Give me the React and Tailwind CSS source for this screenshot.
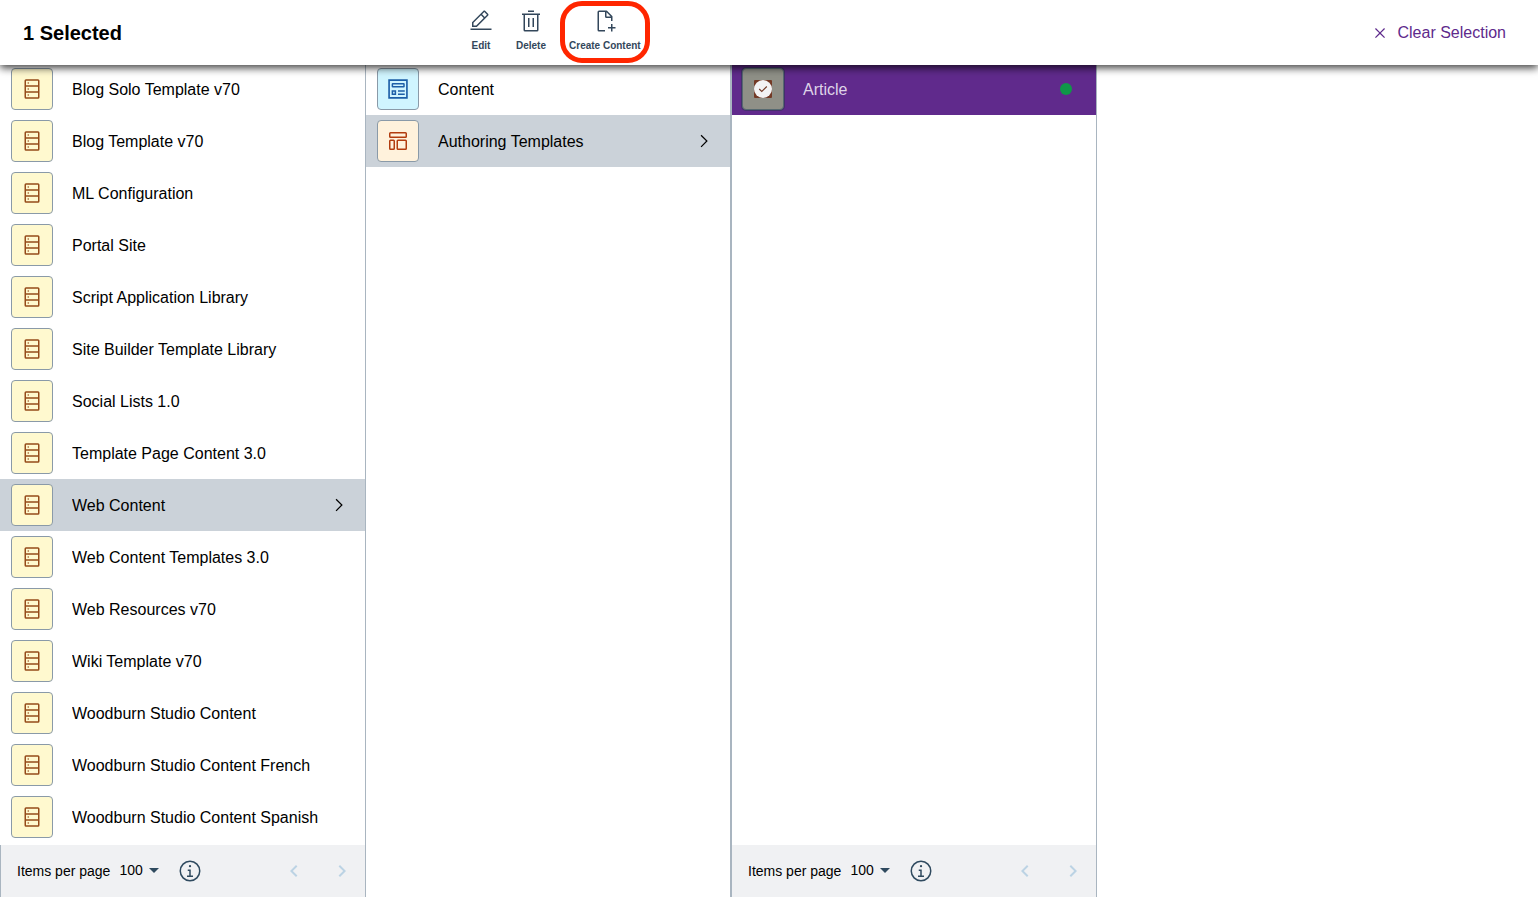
import { useState } from "react";

function Glyph({ size = "size-6", children, viewBox = "0 0 32 32", className = "" }) {
  return (
    <svg viewBox={viewBox} fill="currentColor" aria-hidden="true" className={`${size} shrink-0 ${className}`}>
      {children}
    </svg>
  );
}

const EditIcon = () => (
  <Glyph>
    <path d="M2 26H30V28H2z" />
    <path d="M25.4 9c.8-.8.8-2 0-2.8l-3.6-3.6c-.8-.8-2-.8-2.8 0l-15 15V24h6.4L25.4 9zM20.4 4L24 7.6l-3 3L17.4 7l3-3zM6 22v-3.6l10-10 3.6 3.6-10 10H6z" />
  </Glyph>
);

const TrashIcon = () => (
  <Glyph>
    <path d="M12 12H14V24H12zM18 12H20V24H18z" />
    <path d="M4 6V8H6V28a2 2 0 0 0 2 2H24a2 2 0 0 0 2-2V8h2V6zM8 28V8H24V28zM12 2H20V4H12z" />
  </Glyph>
);

const DocumentAddIcon = () => (
  <Glyph>
    <path d="M30 24H26V20H24V24H20V26H24V30H26V26H30z" />
    <path d="M16 28H8V4h8v6a2 2 0 0 0 2 2h6v4h2V10a.9.9 0 0 0-.3-.7l-7-7A.9.9 0 0 0 18 2H8A2 2 0 0 0 6 4V28a2 2 0 0 0 2 2h8zM18 4.4 23.6 10H18z" />
  </Glyph>
);

const LibraryIcon = () => (
  <Glyph>
    <path d="M24 3H8A2 2 0 0 0 6 5V27a2 2 0 0 0 2 2H24a2 2 0 0 0 2-2V5A2 2 0 0 0 24 3zm0 2v6H8V5zM8 19V13H24v6zm0 8V21H24v6z" />
    <circle cx="11" cy="8" r="1" />
    <circle cx="11" cy="16" r="1" />
    <circle cx="11" cy="24" r="1" />
  </Glyph>
);

const ContentIcon = () => (
  <Glyph>
    <path fillRule="evenodd" d="M3 3H29V29H3zM5.2 5.2V26.8H26.8V5.2z" />
    <path fillRule="evenodd" d="M9 8H23.500a1.500 1.500 0 0 1 1.500 1.500V12.500a1.500 1.500 0 0 1-1.500 1.500H9a1.500 1.500 0 0 1-1.500-1.500V9.500A1.500 1.500 0 0 1 9 8zM9.500 10V12H23V10z" />
    <path fillRule="evenodd" d="M7.500 17.500H13.500V24H7.500zM9.500 19.500V22H11.500V19.500z" />
    <path d="M16 17.500H25V19.500H16zM16 22H25V24H16z" />
  </Glyph>
);

const TemplateIcon = () => (
  <Glyph>
    <path d="M26 6v4H6V6H26m0-2H6A2 2 0 0 0 4 6v4a2 2 0 0 0 2 2H26a2 2 0 0 0 2-2V6a2 2 0 0 0-2-2z" />
    <path d="M10 16V26H6V16h4m0-2H6a2 2 0 0 0-2 2V26a2 2 0 0 0 2 2h4a2 2 0 0 0 2-2V16a2 2 0 0 0-2-2z" />
    <path d="M26 16V26H16V16H26m0-2H16a2 2 0 0 0-2 2V26a2 2 0 0 0 2 2H26a2 2 0 0 0 2-2V16a2 2 0 0 0-2-2z" />
  </Glyph>
);

const InfoIcon = () => (
  <Glyph>
    <path d="M17 22V14H13v2h2v6H12v2h8V22z" />
    <path d="M16 8a1.5 1.5 0 1 0 1.5 1.5A1.5 1.5 0 0 0 16 8z" />
    <path d="M16 30A14 14 0 1 1 30 16 14 14 0 0 1 16 30zM16 4A12 12 0 1 0 28 16 12 12 0 0 0 16 4z" />
  </Glyph>
);

const CloseIcon = () => (
  <Glyph size="size-5">
    <path d="M17.4 16 24 9.4 22.6 8 16 14.6 9.4 8 8 9.4 14.6 16 8 22.6 9.4 24 16 17.4 22.6 24 24 22.6z" />
  </Glyph>
);

const RowChevron = () => (
  <Glyph size="size-5" className="mr-4">
    <path d="M22 16 12 26 10.6 24.6 19.2 16 10.6 7.4 12 6z" />
  </Glyph>
);

const libraries = [
  "Blog Solo Template v70",
  "Blog Template v70",
  "ML Configuration",
  "Portal Site",
  "Script Application Library",
  "Site Builder Template Library",
  "Social Lists 1.0",
  "Template Page Content 3.0",
  "Web Content",
  "Web Content Templates 3.0",
  "Web Resources v70",
  "Wiki Template v70",
  "Woodburn Studio Content",
  "Woodburn Studio Content French",
  "Woodburn Studio Content Spanish",
];

function Tile({ tone, children }) {
  return (
    <span className={`flex size-[42px] shrink-0 items-center justify-center rounded border border-[#8a9aa8] ${tone}`}>
      {children}
    </span>
  );
}

function Row({ label, tone, icon, open, onClick }) {
  return (
    <li>
      <button
        type="button"
        onClick={onClick}
        className={`flex h-[52px] w-full items-center pl-[11px] text-left text-base text-black ${open ? "bg-[#cbd2d9]" : "bg-white"}`}
      >
        <Tile tone={tone}>{icon}</Tile>
        <span className="ml-[19px] flex-1 truncate pt-0.5">{label}</span>
        {open && <RowChevron />}
      </button>
    </li>
  );
}

function Pager({ id }) {
  return (
    <footer className="flex h-[52px] shrink-0 items-center bg-[#f0f1f3] pl-4 text-sm text-black">
      <label htmlFor={id} className="whitespace-nowrap">Items per page</label>
      <div className="relative ml-[9px] flex items-center">
        <select id={id} defaultValue="100" className="w-[47px] appearance-none bg-transparent pb-0.5 text-sm outline-none">
          <option>25</option>
          <option>50</option>
          <option>100</option>
        </select>
        <svg viewBox="0 0 24 24" fill="currentColor" aria-hidden="true" className="pointer-events-none absolute right-0 bottom-0 size-6 text-[#2f4a5f]">
          <path d="M7 10l5 5 5-5z" />
        </svg>
      </div>
      <button type="button" aria-label="Information" className="ml-3 text-[#2f4a5f]">
        <InfoIcon />
      </button>
      <div className="mr-[11px] ml-auto flex gap-6 text-[#bcd3e4]">
        <button type="button" aria-label="Previous page">
          <Glyph viewBox="0 0 24 24"><path d="M15.41 7.41L14 6l-6 6 6 6 1.41-1.41L10.83 12z" /></Glyph>
        </button>
        <button type="button" aria-label="Next page">
          <Glyph viewBox="0 0 24 24"><path d="M10 6L8.59 7.41 13.17 12l-4.58 4.59L10 18l6-6z" /></Glyph>
        </button>
      </div>
    </footer>
  );
}

function Action({ label, icon }) {
  return (
    <button type="button" className="flex flex-col items-center gap-[5px] text-[10px] leading-4 font-bold text-[#33475b]">
      {icon}
      <span className="whitespace-nowrap">{label}</span>
    </button>
  );
}

export default function App() {
  const [library, setLibrary] = useState("Web Content");
  const [folder, setFolder] = useState("Authoring Templates");

  return (
    <div className="flex h-screen flex-col overflow-hidden bg-white pb-2 font-['Liberation_Sans',Arial,sans-serif]">
      <header className="z-10 grid h-[65px] shrink-0 grid-cols-[469fr_1069fr] bg-white shadow-[0_3px_8px_rgba(0,0,0,0.75)]">
        <h1 className="self-center pl-[23px] text-xl font-bold text-black">1 Selected</h1>
        <div className="flex items-start justify-between pr-8">
          <div className="flex gap-[23px] pt-[9px]">
            <Action label="Edit" icon={<EditIcon />} />
            <Action label="Delete" icon={<TrashIcon />} />
            <div className="relative">
              <Action label="Create Content" icon={<DocumentAddIcon />} />
              <span className="pointer-events-none absolute -inset-x-[9px] -top-2 -bottom-[9px] rounded-[22px] border-5 border-[#ff2600]" />
            </div>
          </div>
          <button type="button" className="flex items-center gap-2 self-center text-base text-[#5e2a8c]">
            <CloseIcon />
            Clear Selection
          </button>
        </div>
      </header>

      <main className="grid min-h-0 flex-1 grid-cols-[366fr_365fr_366fr_441fr]">
        <section aria-label="Libraries" className="flex min-h-0 flex-col border-r border-[#a9b5c0]">
          <ul className="-mt-0.5 min-h-0 flex-1 overflow-hidden">
            {libraries.map((name) => (
              <Row
                key={name}
                label={name}
                tone="bg-[#fff9cf] text-[#954b1a]"
                icon={<LibraryIcon />}
                open={name === library}
                onClick={() => setLibrary(name)}
              />
            ))}
          </ul>
          <div className="border-l border-[#a9b5c0]">
            <Pager id="library-page-size" />
          </div>
        </section>

        <section aria-label="Folders" className="min-h-0 border-r border-[#a9b5c0]">
          <ul className="-mt-0.5">
            <Row
              label="Content"
              tone="bg-[#d0f5ff] text-[#1c5fa8]"
              icon={<ContentIcon />}
              open={folder === "Content"}
              onClick={() => setFolder("Content")}
            />
            <Row
              label="Authoring Templates"
              tone="bg-[#fff2dc] text-[#b23c0e]"
              icon={<TemplateIcon />}
              open={folder === "Authoring Templates"}
              onClick={() => setFolder("Authoring Templates")}
            />
          </ul>
        </section>

        <section aria-label="Items" className="flex min-h-0 flex-col border-x border-[#a9b5c0]">
          <ul className="-mt-0.5 min-h-0 flex-1 overflow-hidden">
            <li>
              <label className="flex h-[52px] items-center bg-[#602a8c] pl-[10px] text-base text-[#dfd4e8]">
                <input type="checkbox" defaultChecked className="sr-only" />
                <span className="flex size-[42px] shrink-0 items-center justify-center rounded border border-[#566a70] bg-[#8f9087] ring-1 ring-[#43306b]">
                  <svg viewBox="0 0 18 18" aria-hidden="true" className="size-[18px]">
                    <rect width="18" height="18" rx="1" fill="#733a26" />
                    <circle cx="9" cy="9" r="9" fill="#f3f3f4" />
                    <path d="M5.2 9 7.800 11.500 12.800 6.500" fill="none" stroke="#733a26" strokeWidth="1.1" />
                  </svg>
                </span>
                <span className="ml-[19px] flex-1 pt-0.5">Article</span>
                <span className="mr-6 size-3 rounded-full bg-[#0f9748]" />
              </label>
            </li>
          </ul>
          <Pager id="item-page-size" />
        </section>
      </main>
    </div>
  );
}
